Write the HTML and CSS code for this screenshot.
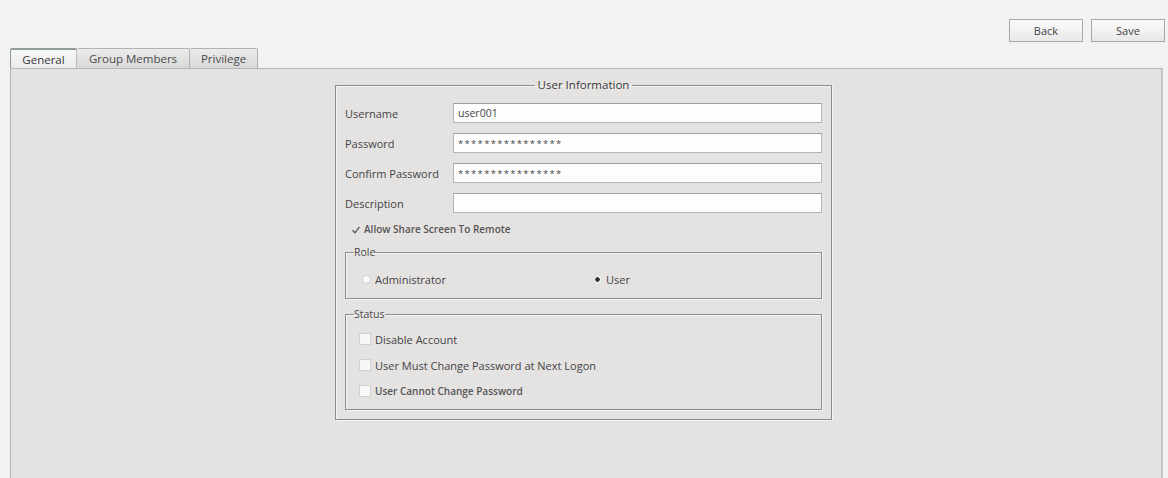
FILE: index.html
```html
<!DOCTYPE html>
<html>
<head>
	<title>User Properties</title>
<link rel="stylesheet" href="styles.css">
</head>
<body>

<div class="toolbar">
	<button class="btn">Back</button>
	<button class="btn">Save</button>
</div>

<div class="tabStrip">
	<span class="tab tabActive">General</span>
	<span class="tab">Group Members</span>
	<span class="tab">Privilege</span>
</div>

<div class="tabPanel">
	<fieldset class="groupBox userInfo">
		<legend class="centerLegend">User Information</legend>

		<div class="formGrid">
			<label class="fieldLabel">Username</label>
			<input class="textField" type="text" value="user001">
			<label class="fieldLabel">Password</label>
			<input class="textField stars" type="text" value="****************">
			<label class="fieldLabel">Confirm Password</label>
			<input class="textField stars" type="text" value="****************">
			<label class="fieldLabel">Description</label>
			<input class="textField" type="text" value="">
		</div>

		<div class="checkRow shareRow">
			<span class="tick">
				<svg width="10" height="10" viewBox="0 0 10 10"><path d="M1.5 5.2 L4 7.8 L8.5 1.8" fill="none" stroke="#555" stroke-width="1.3"/></svg>
			</span>
			<span class="boldText">Allow Share Screen To Remote</span>
		</div>

		<fieldset class="groupBox subBox roleBox">
			<legend class="leftLegend">Role</legend>
			<div class="radioRow">
				<div class="radioItem radioAdmin"><span class="radio"></span>Administrator</div>
				<div class="radioItem"><span class="radio radioOn"></span>User</div>
			</div>
		</fieldset>

		<fieldset class="groupBox subBox statusBox">
			<legend class="leftLegend">Status</legend>
			<div class="checkRow"><span class="box"></span>Disable Account</div>
			<div class="checkRow"><span class="box"></span>User Must Change Password at Next Logon</div>
			<div class="checkRow"><span class="box"></span><span class="boldText">User Cannot Change Password</span></div>
		</fieldset>
	</fieldset>
</div>

</body>
</html>
```

FILE: styles.css
```css
body {
	margin: 0;
	background-color: #f3f2f1;
	font-family: "Open Sans", "DejaVu Sans", sans-serif;
	font-size: 11px;
	color: #3c3c3c;
	overflow: hidden;
}

/* top right buttons */
.toolbar {
	display: flex;
	justify-content: flex-end;
	gap: 8px;
	padding: 19px 3px 0 0;
}
.btn {
	width: 74px;
	height: 23px;
	border: 1px solid #a9a9a9;
	background: linear-gradient(#fbfbfb, #e9e8e8);
	font-family: "Open Sans", "DejaVu Sans", sans-serif;
	font-size: 11px;
	color: #444;
	padding: 0;
}

/* tabs */
.tabStrip {
	display: flex;
	padding-left: 10px;
	margin-top: 6px;
	height: 20px;
}
.tab {
	display: flex;
	align-items: center;
	justify-content: center;
	box-sizing: border-box;
	height: 20px;
	padding: 0 10px;
	border: 1px solid #b2b2b2;
	border-left: none;
	border-bottom: none;
	background: linear-gradient(#ececec, #d9d8d8);
	font-size: 11.5px;
	color: #4a4a4a;
	border-radius: 2px 2px 0 0;
}
.tabActive {
	width: 67px;
	border-left: 1px solid #8f9a9a;
	border-top: 2px solid #8f9a9a;
	border-right: 1px solid #b9b9b9;
	background: linear-gradient(#f7f7f6, #ecebeb);
	color: #3a3a3a;
}
.tab:nth-child(2) { width: 113px; }
.tab:nth-child(3) { width: 68px; }

.tabPanel {
	margin: 0 5px 0 10px;
	height: 420px;
	border: 1px solid #b6b6b6;
	border-right: 2px solid #c4c2c2;
	background-color: #e5e2e2;
	padding-top: 8px;
}

/* group boxes */
.groupBox {
	margin: 0;
	min-width: 0;
	border: 1px solid #8c8c8c;
	box-shadow: 1px 1px 0 #f6f5f5, inset 1px 1px 0 #f6f5f5;
	padding: 0 8px;
}
.userInfo {
	box-sizing: border-box;
	width: 497px;
	margin-left: 324px;
	padding: 0 9px 9px 9px;
}
.centerLegend {
	margin: 0 auto;
	padding: 0 3px;
	font-size: 11.5px;
	line-height: 16px;
	color: #3a3a3a;
}
.leftLegend {
	padding: 0;
	font-size: 10.5px;
	line-height: 14px;
	color: #4a4a4a;
}

.formGrid {
	display: grid;
	grid-template-columns: 108px 1fr;
	row-gap: 10px;
	align-items: center;
	margin-top: 10px;
}
.fieldLabel {
	font-size: 11px;
	color: #444;
}
.textField {
	box-sizing: border-box;
	height: 20px;
	border: 1px solid #b5b5b5;
	border-top-color: #9e9e9e;
	background-color: #fdfdfd;
	font-family: "Open Sans", "DejaVu Sans", sans-serif;
	font-size: 10.5px;
	color: #444;
	padding: 0 4px;
	margin: 0;
}
.stars {
	font-size: 9.5px;
	letter-spacing: 1.3px;
}

.checkRow {
	display: flex;
	align-items: center;
	height: 14px;
	font-size: 10.5px;
	color: #444;
}
.shareRow {
	margin: 9px 0 9px 6px;
}
.tick {
	width: 12px;
	height: 10px;
	margin-right: 1px;
}
.boldText {
	font-weight: 600;
	color: #555;
	font-size: 10px;
}

.roleBox {
	height: 52px;
}
.radioRow {
	display: flex;
	padding: 13px 0 0 8px;
}
.radioItem {
	display: flex;
	align-items: center;
	font-size: 11px;
	color: #444;
}
.radioAdmin {
	width: 231px;
}
.radio {
	box-sizing: border-box;
	width: 9px;
	height: 9px;
	border-radius: 50%;
	border: 1px solid #cfcfcf;
	background: #fafafa;
	margin-right: 4px;
}
.radioOn {
	background: radial-gradient(circle, #333 0 2px, #f4f4f4 2.5px);
	border-color: #e3e3e3;
}

.statusBox {
	margin-top: 8px;
	padding-top: 5px;
	padding-bottom: 5px;
}
.statusBox .checkRow {
	height: 26px;
	padding-left: 5px;
	font-size: 11px;
}
.box {
	box-sizing: border-box;
	width: 12px;
	height: 12px;
	border: 1px solid #d0d0d0;
	background: #f8f8f8;
	margin-right: 4px;
}
```
